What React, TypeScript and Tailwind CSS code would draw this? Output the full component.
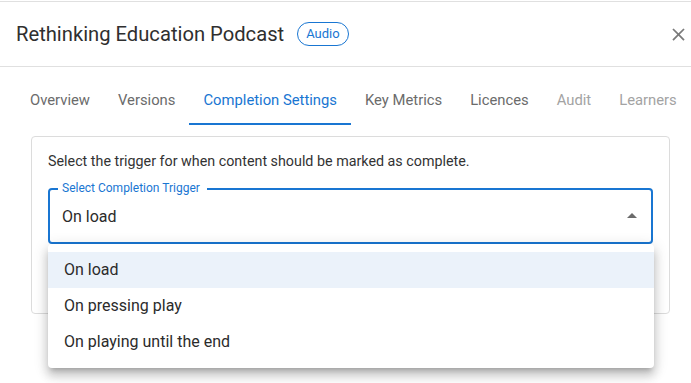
import React from "react";

const TABS = [
  { label: "Overview", state: "idle" },
  { label: "Versions", state: "idle" },
  { label: "Completion Settings", state: "active" },
  { label: "Key Metrics", state: "idle" },
  { label: "Licences", state: "idle" },
  { label: "Audit", state: "disabled" },
  { label: "Learners", state: "disabled" },
];

const OPTIONS = ["On load", "On pressing play", "On playing until the end"];

function CloseIcon() {
  return (
    <svg width="21" height="21" viewBox="0 0 24 24" fill="#7a7a7a">
      <path d="M19 6.41 17.59 5 12 10.59 6.41 5 5 6.41 10.59 12 5 17.59 6.41 19 12 13.41 17.59 19 19 17.59 13.41 12z" />
    </svg>
  );
}

function ArrowUp() {
  return (
    <svg width="24" height="24" viewBox="0 0 24 24" fill="#6b6b6b">
      <path d="M7 14l5-5 5 5z" />
    </svg>
  );
}

export default function App() {
  return (
    <div className="relative h-[383px] w-[691px] overflow-hidden bg-white pt-px font-['Roboto',sans-serif] text-[#333]">
      <div className="flex h-[66px] items-center border-y border-[#e0e0e0] pl-4">
        <div className="text-[20.2px] leading-none text-[#2f2f2f]">Rethinking Education Podcast</div>
        <span className="ml-[13px] flex h-6 items-center rounded-full border border-[#1976d2] px-[8px] text-[13px] text-[#1976d2]">
          Audio
        </span>
        <button type="button" className="ml-auto flex h-8 w-[26px] items-center justify-center">
          <CloseIcon />
        </button>
      </div>

      <div className="mt-[10px] flex overflow-hidden whitespace-nowrap pl-4">
        {TABS.map((tab) => (
          <div
            key={tab.label}
            className={
              tab.state === "active"
                ? "flex h-12 shrink-0 items-center border-b-2 border-[#1976d2] px-[14px] text-[14.8px] text-[#1976d2]"
                : tab.state === "disabled"
                  ? "flex h-12 shrink-0 items-center border-b-2 border-transparent px-[14px] text-[14.8px] text-[#a3a3a3]"
                  : "flex h-12 shrink-0 items-center border-b-2 border-transparent px-[14px] text-[14.8px] text-[#6b6b6b]"
            }
          >
            {tab.label}
          </div>
        ))}
      </div>

      <div className="ml-[31px] mr-[21px] mt-[11px] h-[178px] rounded border border-[#dcdcdc] px-4 pt-[14px]">
        <div className="text-[14.3px] leading-5 text-[#333]">
          Select the trigger for when content should be marked as complete.
        </div>
        <div className="relative mt-[17px] flex h-14 items-center rounded border-2 border-[#1976d2] pl-3 pr-[7px]">
          <span className="absolute left-[8px] top-[-9px] bg-white pl-[4px] pr-[7px] text-[12px] leading-[14px] text-[#1976d2]">
            Select Completion Trigger
          </span>
          <span className="pt-[2px] text-[16px] text-[#2b2b2b]">On load</span>
          <span className="ml-auto">
            <ArrowUp />
          </span>
        </div>
      </div>

      <div className="absolute left-[48px] top-[244px] w-[606px] rounded bg-white py-2 shadow-[0px_5px_5px_-3px_rgba(0,0,0,0.2),0px_8px_10px_1px_rgba(0,0,0,0.14),0px_3px_14px_2px_rgba(0,0,0,0.12)]">
        {OPTIONS.map((option, index) => (
          <div
            key={option}
            className={
              index === 0
                ? "flex h-9 items-center bg-[#ebf2fa] px-4 text-[16px] text-[#2b2b2b]"
                : "flex h-9 items-center px-4 text-[16px] text-[#2b2b2b]"
            }
          >
            {option}
          </div>
        ))}
      </div>
    </div>
  );
}
